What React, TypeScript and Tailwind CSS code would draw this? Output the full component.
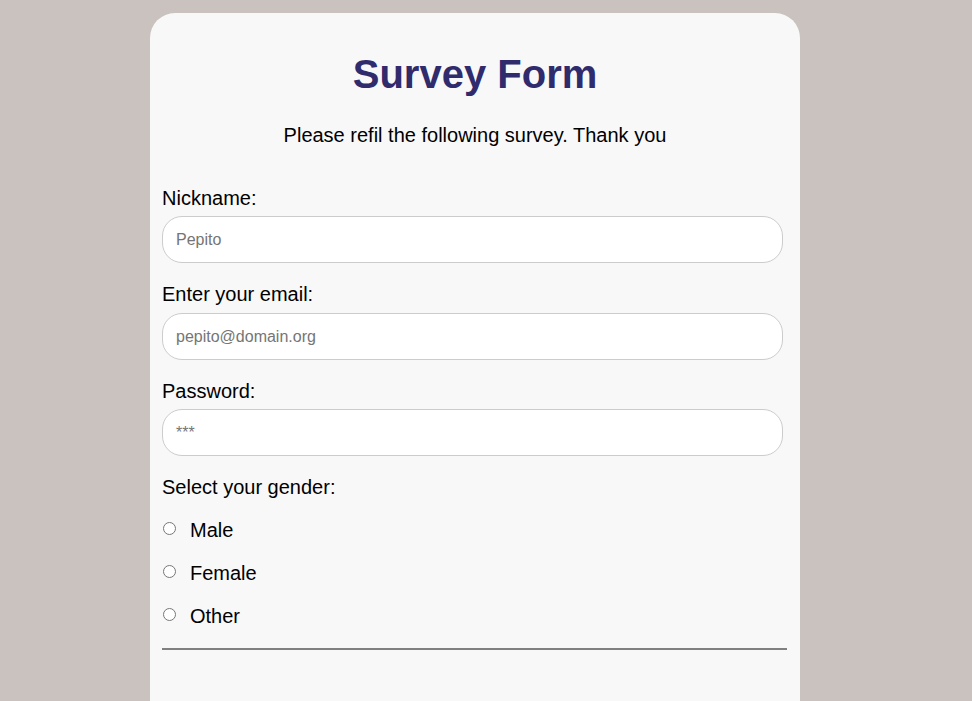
import React from "react";

export default function App() {
  const font = { fontFamily: '"Liberation Sans", Arial, sans-serif' };
  return (
    <div className="min-h-screen bg-[#c9c2bf] pt-[13px] pl-[150px]" style={font}>
      <div className="w-[650px] bg-[#f8f8f8] rounded-[25px] px-3 pt-[38px] pb-[120px] text-black">
        <h1 className="text-[40px] font-bold leading-[46px] text-center text-[#2f2b6c]">Survey Form</h1>
        <p className="text-[20px] leading-[23px] text-center mt-[27px]">Please refil the following survey. Thank you</p>
        <form className="mt-[40px]">
          <label className="block text-[20px] leading-[23px]">Nickname:</label>
          <input
            type="text"
            placeholder="Pepito"
            className="block mt-[6px] w-[621px] h-[47px] rounded-[20px] border border-[#cccccc] bg-white px-[13px] text-[16px] placeholder:text-[#757575] outline-none"
          />
          <label className="block mt-[20px] text-[20px] leading-[23px]">Enter your email:</label>
          <input
            type="email"
            placeholder="pepito@domain.org"
            className="block mt-[7px] w-[621px] h-[47px] rounded-[20px] border border-[#cccccc] bg-white px-[13px] text-[16px] placeholder:text-[#757575] outline-none"
          />
          <label className="block mt-[20px] text-[20px] leading-[23px]">Password:</label>
          <input
            type="password"
            placeholder="***"
            className="block mt-[6px] w-[621px] h-[47px] rounded-[20px] border border-[#cccccc] bg-white px-[13px] text-[16px] placeholder:text-[#757575] outline-none"
          />
          <label className="block mt-[20px] text-[20px] leading-[23px]">Select your gender:</label>
          <div className="mt-[20px] flex flex-col gap-[20px]">
            {["Male", "Female", "Other"].map((g) => (
              <label key={g} className="flex items-center h-[23px] text-[20px] leading-[23px]">
                <input type="radio" name="gender" className="m-0 ml-[1px] w-[13px] h-[13px] -translate-y-[2px]" />
                <span className="ml-[14px]">{g}</span>
              </label>
            ))}
          </div>
          <hr className="mt-[20px] w-[625px] border-0 border-t-2 border-[#808080]" />
        </form>
      </div>
    </div>
  );
}
